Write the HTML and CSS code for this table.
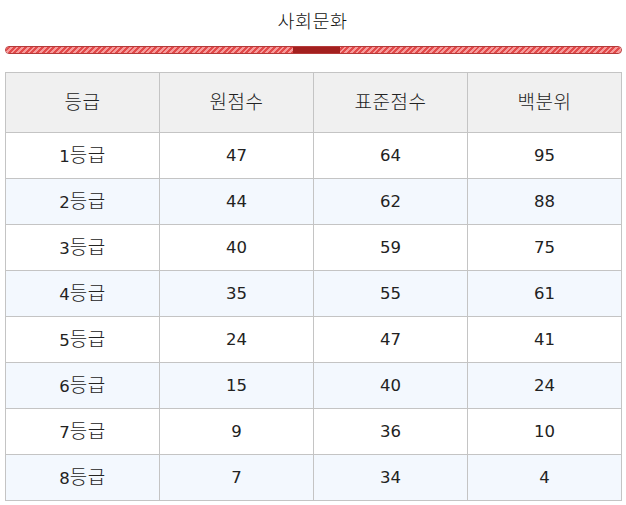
FILE: index.html
```html
<!DOCTYPE html>
<html lang="ko">
<head>
<meta charset="utf-8">
<link rel="stylesheet" href="styles.css">
</head>
<body>
<div class="page">
  <h1 class="title"><span class="ko">사회문화</span></h1>
  <div class="bar">
    <div class="bar-seg stripe"></div>
    <div class="bar-seg active"></div>
    <div class="bar-seg stripe grow"></div>
  </div>
  <table class="grades">
    <thead>
      <tr><th><span class="ko">등급</span></th><th><span class="ko">원점수</span></th><th><span class="ko">표준점수</span></th><th><span class="ko">백분위</span></th></tr>
    </thead>
    <tbody>
      <tr><td>1<span class="ko">등급</span></td><td>47</td><td>64</td><td>95</td></tr>
      <tr class="alt"><td>2<span class="ko">등급</span></td><td>44</td><td>62</td><td>88</td></tr>
      <tr><td>3<span class="ko">등급</span></td><td>40</td><td>59</td><td>75</td></tr>
      <tr class="alt"><td>4<span class="ko">등급</span></td><td>35</td><td>55</td><td>61</td></tr>
      <tr><td>5<span class="ko">등급</span></td><td>24</td><td>47</td><td>41</td></tr>
      <tr class="alt"><td>6<span class="ko">등급</span></td><td>15</td><td>40</td><td>24</td></tr>
      <tr><td>7<span class="ko">등급</span></td><td>9</td><td>36</td><td>10</td></tr>
      <tr class="alt"><td>8<span class="ko">등급</span></td><td>7</td><td>34</td><td>4</td></tr>
    </tbody>
  </table>
</div>
</body>
</html>
```

FILE: styles.css
```css
html, body {
  margin: 0;
  padding: 0;
  background: #ffffff;
}
body {
  font-family: "DejaVu Sans", "Noto Sans CJK KR", sans-serif;
  color: #222;
}
.ko {
  font-family: "Noto Sans CJK KR", sans-serif;
  font-weight: 300;
  font-size: 19px;
  letter-spacing: 0.5px;
}
.page {
  padding: 0 4px 0 5px;
}
.title {
  margin: 0;
  height: 40px;
  line-height: 40px;
  font-size: 18px;
  font-weight: normal;
  text-align: center;
  color: #111;
  padding-right: 2px;
}
.title .ko {
  font-size: 18.5px;
}
.bar {
  margin-top: 6px;
  height: 8px;
  display: flex;
  border-radius: 4px;
  overflow: hidden;
  border: 1px solid #b43a3a;
  box-sizing: border-box;
}
.bar-seg.stripe {
  width: 287px;
  background: repeating-linear-gradient(-45deg, #e24a4a 0 2px, #f79a9a 2px 4px);
}
.bar-seg.grow {
  flex: 1;
  width: auto;
}
.bar-seg.active {
  width: 47px;
  background: #a3201f;
}
.grades {
  margin-top: 18px;
  width: 617px;
  border-collapse: collapse;
  table-layout: fixed;
  font-size: 16.5px;
}
.grades th, .grades td {
  border: 1px solid #c4c4c4;
  text-align: center;
  font-weight: normal;
  padding: 0;
  line-height: 20px;
}
.grades th {
  height: 59px;
  background: #f0f0f0;
  color: #222;
}
.grades td {
  height: 45px;
  color: #222;
}
.grades tr.alt td {
  background: #f3f8fe;
}
```
